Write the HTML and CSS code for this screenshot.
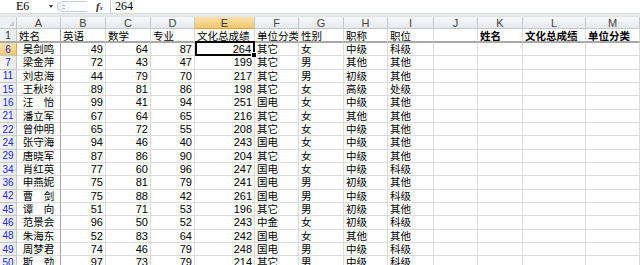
FILE: index.html
```html
<!DOCTYPE html>
<html lang="zh-CN">
<head>
<meta charset="utf-8">
<title>成绩表</title>
<link rel="stylesheet" href="styles.css">
</head>
<body>
<div class="fbar">
  <div class="namebox"><span class="ref">E6</span><span class="drop"></span></div>
  <div class="grip"><span class="knob"></span></div>
  <div class="fx">f<sub>x</sub></div>
  <div class="formula">264</div>
</div>
<div class="band"></div>
<div class="sheet">
  <div class="hd corner"><span class="tri"></span></div>
  <div class="hd col">A</div><div class="hd col">B</div><div class="hd col">C</div><div class="hd col">D</div>
  <div class="hd col sel">E</div><div class="hd col">F</div><div class="hd col">G</div><div class="hd col">H</div>
  <div class="hd col">I</div><div class="hd col">J</div><div class="hd col">K</div><div class="hd col">L</div><div class="hd col">M</div>

  <div class="hd rn r1">1</div>
  <div class="c s top fa">姓名</div><div class="c s top">英语</div><div class="c s top">数学</div><div class="c s top">专业</div>
  <div class="c s top">文化总成绩</div><div class="c s top">单位分类</div><div class="c s top">性别</div><div class="c s top">职称</div>
  <div class="c s top">职位</div><div class="c top"></div><div class="c s b top">姓名</div><div class="c s b top">文化总成绩</div><div class="c s b top">单位分类</div>

  <div class="hd rn rsel">6</div>
  <div class="c m fa">吴剑鸣</div><div class="c n">49</div><div class="c n">64</div><div class="c n">87</div><div class="c n cur">264</div><div class="c s">其它</div><div class="c s">女</div><div class="c s">中级</div><div class="c s">科级</div><div class="c"></div><div class="c"></div><div class="c"></div><div class="c"></div>

  <div class="hd rn">7</div>
  <div class="c m fa">梁金萍</div><div class="c n">72</div><div class="c n">43</div><div class="c n">47</div><div class="c n">199</div><div class="c s">其它</div><div class="c s">男</div><div class="c s">其他</div><div class="c s">其他</div><div class="c"></div><div class="c"></div><div class="c"></div><div class="c"></div>

  <div class="hd rn">11</div>
  <div class="c m fa">刘忠海</div><div class="c n">44</div><div class="c n">79</div><div class="c n">70</div><div class="c n">217</div><div class="c s">其它</div><div class="c s">男</div><div class="c s">初级</div><div class="c s">其他</div><div class="c"></div><div class="c"></div><div class="c"></div><div class="c"></div>

  <div class="hd rn">15</div>
  <div class="c m fa">王秋玲</div><div class="c n">89</div><div class="c n">81</div><div class="c n">86</div><div class="c n">198</div><div class="c s">其它</div><div class="c s">女</div><div class="c s">高级</div><div class="c s">处级</div><div class="c"></div><div class="c"></div><div class="c"></div><div class="c"></div>

  <div class="hd rn">16</div>
  <div class="c m fa">汪　怡</div><div class="c n">99</div><div class="c n">41</div><div class="c n">94</div><div class="c n">251</div><div class="c s">国电</div><div class="c s">女</div><div class="c s">中级</div><div class="c s">其他</div><div class="c"></div><div class="c"></div><div class="c"></div><div class="c"></div>

  <div class="hd rn">21</div>
  <div class="c m fa">潘立军</div><div class="c n">67</div><div class="c n">64</div><div class="c n">65</div><div class="c n">216</div><div class="c s">其它</div><div class="c s">女</div><div class="c s">其他</div><div class="c s">其他</div><div class="c"></div><div class="c"></div><div class="c"></div><div class="c"></div>

  <div class="hd rn">22</div>
  <div class="c m fa">曾仲明</div><div class="c n">65</div><div class="c n">72</div><div class="c n">55</div><div class="c n">208</div><div class="c s">其它</div><div class="c s">女</div><div class="c s">中级</div><div class="c s">其他</div><div class="c"></div><div class="c"></div><div class="c"></div><div class="c"></div>

  <div class="hd rn">24</div>
  <div class="c m fa">张守海</div><div class="c n">94</div><div class="c n">46</div><div class="c n">40</div><div class="c n">243</div><div class="c s">国电</div><div class="c s">女</div><div class="c s">中级</div><div class="c s">其他</div><div class="c"></div><div class="c"></div><div class="c"></div><div class="c"></div>

  <div class="hd rn">29</div>
  <div class="c m fa">唐晓军</div><div class="c n">87</div><div class="c n">86</div><div class="c n">90</div><div class="c n">204</div><div class="c s">其它</div><div class="c s">女</div><div class="c s">中级</div><div class="c s">其他</div><div class="c"></div><div class="c"></div><div class="c"></div><div class="c"></div>

  <div class="hd rn">34</div>
  <div class="c m fa">肖红英</div><div class="c n">77</div><div class="c n">60</div><div class="c n">96</div><div class="c n">247</div><div class="c s">国电</div><div class="c s">女</div><div class="c s">中级</div><div class="c s">科级</div><div class="c"></div><div class="c"></div><div class="c"></div><div class="c"></div>

  <div class="hd rn">36</div>
  <div class="c m fa">申燕妮</div><div class="c n">75</div><div class="c n">81</div><div class="c n">79</div><div class="c n">241</div><div class="c s">国电</div><div class="c s">男</div><div class="c s">初级</div><div class="c s">其他</div><div class="c"></div><div class="c"></div><div class="c"></div><div class="c"></div>

  <div class="hd rn">42</div>
  <div class="c m fa">曹　剑</div><div class="c n">75</div><div class="c n">88</div><div class="c n">42</div><div class="c n">261</div><div class="c s">国电</div><div class="c s">男</div><div class="c s">中级</div><div class="c s">科级</div><div class="c"></div><div class="c"></div><div class="c"></div><div class="c"></div>

  <div class="hd rn">45</div>
  <div class="c m fa">谭　向</div><div class="c n">51</div><div class="c n">71</div><div class="c n">53</div><div class="c n">196</div><div class="c s">其它</div><div class="c s">男</div><div class="c s">初级</div><div class="c s">其他</div><div class="c"></div><div class="c"></div><div class="c"></div><div class="c"></div>

  <div class="hd rn">46</div>
  <div class="c m fa">范景会</div><div class="c n">96</div><div class="c n">50</div><div class="c n">52</div><div class="c n">243</div><div class="c s">中金</div><div class="c s">女</div><div class="c s">初级</div><div class="c s">科级</div><div class="c"></div><div class="c"></div><div class="c"></div><div class="c"></div>

  <div class="hd rn">48</div>
  <div class="c m fa">朱海东</div><div class="c n">52</div><div class="c n">83</div><div class="c n">64</div><div class="c n">242</div><div class="c s">国电</div><div class="c s">女</div><div class="c s">其他</div><div class="c s">其他</div><div class="c"></div><div class="c"></div><div class="c"></div><div class="c"></div>

  <div class="hd rn">49</div>
  <div class="c m fa">周梦君</div><div class="c n">74</div><div class="c n">46</div><div class="c n">79</div><div class="c n">248</div><div class="c s">国电</div><div class="c s">男</div><div class="c s">中级</div><div class="c s">科级</div><div class="c"></div><div class="c"></div><div class="c"></div><div class="c"></div>

  <div class="hd rn">50</div>
  <div class="c m fa">斯　劲</div><div class="c n">97</div><div class="c n">73</div><div class="c n">79</div><div class="c n">214</div><div class="c s">其它</div><div class="c s">男</div><div class="c s">中级</div><div class="c s">科级</div><div class="c"></div><div class="c"></div><div class="c"></div><div class="c"></div>
</div>
</body>
</html>
```
FILE: styles.css
```css
html, body {
  margin: 0;
  padding: 0;
  background: #fff;
  overflow: hidden;
}
body {
  font-family: "Liberation Sans", "Noto Sans CJK SC", sans-serif;
  color: #000;
}

/* formula bar */
.fbar {
  display: flex;
  height: 13px;
  background: #fff;
  align-items: stretch;
}
.namebox {
  width: 57px;
  display: flex;
  align-items: center;
  position: relative;
  box-sizing: border-box;
}
.ref {
  font-family: "Liberation Serif", serif;
  font-size: 12px;
  margin-left: 16px;
  line-height: 13px;
}
.drop {
  margin-left: 20px;
  width: 0;
  height: 0;
  border-left: 2.5px solid transparent;
  border-right: 2.5px solid transparent;
  border-top: 3px solid #333;
}
.grip {
  width: 39px;
  display: flex;
  align-items: center;
}
.knob {
  width: 30px;
  height: 11px;
  box-sizing: border-box;
  border: 1px solid #c9ced5;
  border-right: none;
  border-radius: 6px 0 0 6px;
  background: linear-gradient(90deg, #eef1f4, #fff 70%);
  position: relative;
}
.knob::after {
  content: "";
  position: absolute;
  left: 4px;
  top: 3px;
  width: 3px;
  height: 2px;
  border-top: 1px solid #b8bdc4;
  border-bottom: 1px solid #b8bdc4;
}
.fx {
  width: 14px;
  font-family: "Liberation Serif", serif;
  font-style: italic;
  font-weight: bold;
  font-size: 11px;
  line-height: 13px;
  color: #333;
}
.fx sub {
  font-size: 6px;
  vertical-align: baseline;
}
.formula {
  flex: 1;
  border-left: 1px solid #c6cbd2;
  padding-left: 4px;
  font-family: "Liberation Serif", serif;
  font-size: 12px;
  line-height: 13px;
}
.band {
  height: 4px;
  box-sizing: border-box;
  background: linear-gradient(#eceef1, #dfe2e6);
  border-top: 1px solid #d7dbe0;
}

/* sheet grid */
.sheet {
  display: grid;
  grid-template-columns: 17px 44px 45px 45px 44px 60px 44px 45px 44px 46px 44px 45px 63px 1fr;
  grid-template-rows: 12px 14px;
  grid-auto-rows: 13.33px;
}
.hd {
  box-sizing: border-box;
  background: linear-gradient(#f7f8fa, #e6e9ee);
  border-right: 1px solid #c3c8cf;
  border-bottom: 1px solid #c3c8cf;
  display: flex;
  align-items: center;
  justify-content: center;
  font-size: 11px;
  color: #444;
}
.corner {
  position: relative;
  background: #eef0f3;
}
.tri {
  position: absolute;
  right: 2px;
  bottom: 2px;
  width: 0;
  height: 0;
  border-left: 5px solid transparent;
  border-bottom: 5px solid #c9cdd3;
}
.col {
  line-height: 12px;
}
.col.sel {
  background: linear-gradient(#fae2ad, #f3c76d);
  border-bottom-color: #f0a43c;
  color: #333;
}
.rn {
  font-size: 10px;
  color: #2727ee;
  background: linear-gradient(90deg, #f3f5f8, #e8ebef);
}
.rn.r1 {
  color: #333;
  border-bottom: 2px solid #a9a9a9;
}
.rn.rsel {
  background: linear-gradient(#fae2ad, #f3c76d);
  border-right-color: #f0a43c;
}

.c {
  box-sizing: border-box;
  border-right: 1px solid #dcdcdc;
  border-bottom: 1px solid #dcdcdc;
  display: flex;
  align-items: center;
  overflow: hidden;
  white-space: nowrap;
  padding: 0 2px;
  line-height: 12px;
}
.c.top {
  border-bottom: 2px solid #a9a9a9;
  padding-top: 1px;
}
.c.fa {
  border-right-color: #a3a3a3;
}
.s {
  font-size: 10.5px;
  justify-content: flex-start;
}
.s.b {
  font-weight: bold;
}
.m {
  font-size: 10.5px;
  justify-content: center;
}
.n {
  font-size: 11px;
  justify-content: flex-end;
}

/* active cell outline with fill handle */
.cur {
  position: relative;
  overflow: visible;
  padding-right: 3px;
}
.cur::after {
  content: "";
  position: absolute;
  left: 0;
  top: -2px;
  right: -1px;
  bottom: -1px;
  border: 2px solid #000;
}
.cur::before {
  content: "";
  position: absolute;
  right: -3px;
  bottom: -3px;
  width: 4px;
  height: 4px;
  background: #000;
  border: 1px solid #fff;
  z-index: 1;
}
```
